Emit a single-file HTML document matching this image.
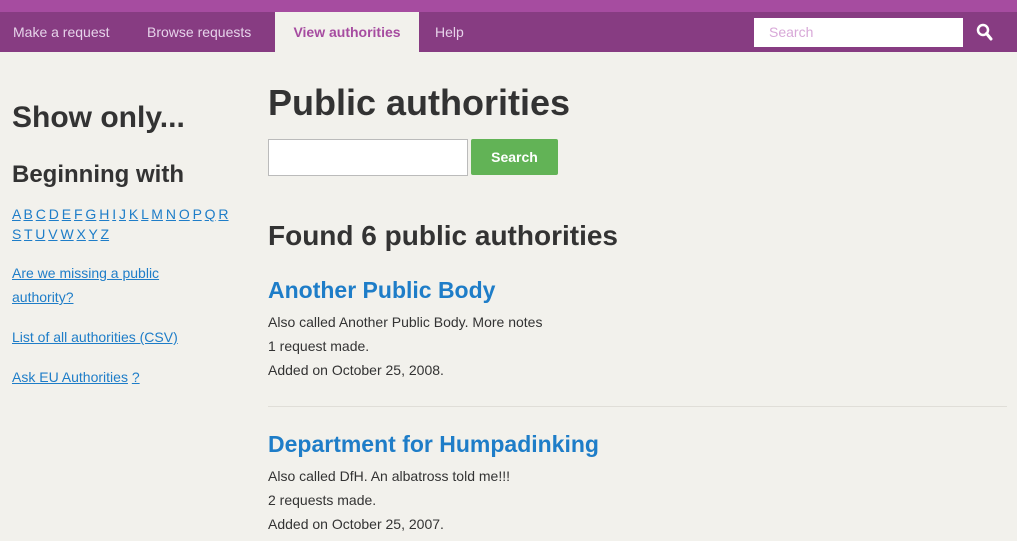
<!DOCTYPE html>
<html><head><meta charset="utf-8"><style>
*{margin:0;padding:0;box-sizing:border-box}
body{width:1017px;height:541px;overflow:hidden;background:#f2f1ec;font-family:"Liberation Sans",sans-serif;color:#333}
.top{height:12px;background:#a64ca0}
.nav{height:40px;background:#873c82;position:relative}
.nav a{position:absolute;top:0;height:40px;line-height:40px;font-size:14px;color:#e6d3ea;text-decoration:none}
.nav a.act{background:#f2f1ec;color:#a64ca0;font-weight:bold;left:275px;width:144px;text-align:center}
.srch{position:absolute;left:754px;top:6px;width:209px;height:29px;background:#fff;font-size:14px;color:#d8a8d8;padding:6px 15px}
a{color:#1e7dc8;text-decoration:underline}
.side{position:absolute;left:12px;top:101px;width:175px}
.side h2{font-size:30px;font-weight:bold;height:60px}
.side h3{font-size:24px;font-weight:bold;height:43px}
.side p{font-size:14px;line-height:24px;margin-bottom:16px}
.side .al{font-size:14px;line-height:20px;height:57px;width:230px;word-spacing:-1px}
.main{position:absolute;left:268px;top:80px;width:739px}
h1{font-size:36px;font-weight:bold;margin-top:2px;height:57px}
.box{display:flex;gap:3px}
.box .i{width:200px;height:37px;border:1px solid #bbb;background:#fff}
.box .b{width:87px;height:36px;background:#62b356;color:#fff;font-weight:bold;font-size:14px;text-align:center;line-height:36px;border-radius:2px}
h2.f{font-size:28px;font-weight:bold;margin-top:44px;height:57px}
.e h3{font-size:23px;font-weight:bold;color:#1e7dc8;height:29px}
.e p{font-size:14px;line-height:24px;margin-top:4px}
hr{border:0;border-top:1px solid #e0ded8;margin:24px 0 24px}
</style></head><body>
<div class="top"></div>
<div class="nav">
<a style="left:13px">Make a request</a>
<a style="left:147px">Browse requests</a>
<a class="act">View authorities</a>
<a style="left:435px">Help</a>
<div class="srch">Search</div>
<svg style="position:absolute;left:975px;top:10px" width="20" height="20" viewBox="0 0 20 20"><circle cx="8" cy="8" r="5" fill="none" stroke="#fff" stroke-width="2.5"/><path d="M11.5 11.5 L16 17" stroke="#fff" stroke-width="3" stroke-linecap="round"/></svg>
</div>
<div class="side">
<h2>Show only...</h2>
<h3>Beginning with</h3>
<div class="al"><a>A</a> <a>B</a> <a>C</a> <a>D</a> <a>E</a> <a>F</a> <a>G</a> <a>H</a> <a>I</a> <a>J</a> <a>K</a> <a>L</a> <a>M</a> <a>N</a> <a>O</a> <a>P</a> <a>Q</a> <a>R</a><br><a>S</a> <a>T</a> <a>U</a> <a>V</a> <a>W</a> <a>X</a> <a>Y</a> <a>Z</a></div>
<p><a>Are we missing a public authority?</a></p>
<p><a>List of all authorities (CSV)</a></p>
<p><a>Ask EU Authorities</a> <a>?</a></p>
</div>
<div class="main">
<h1>Public authorities</h1>
<div class="box"><div class="i"></div><div class="b">Search</div></div>
<h2 class="f">Found 6 public authorities</h2>
<div class="e"><h3>Another Public Body</h3><p>Also called Another Public Body. More notes<br>1 request made.<br>Added on October 25, 2008.</p></div>
<hr>
<div class="e"><h3>Department for Humpadinking</h3><p>Also called DfH. An albatross told me!!!<br>2 requests made.<br>Added on October 25, 2007.</p></div>
</div>
</body></html>
